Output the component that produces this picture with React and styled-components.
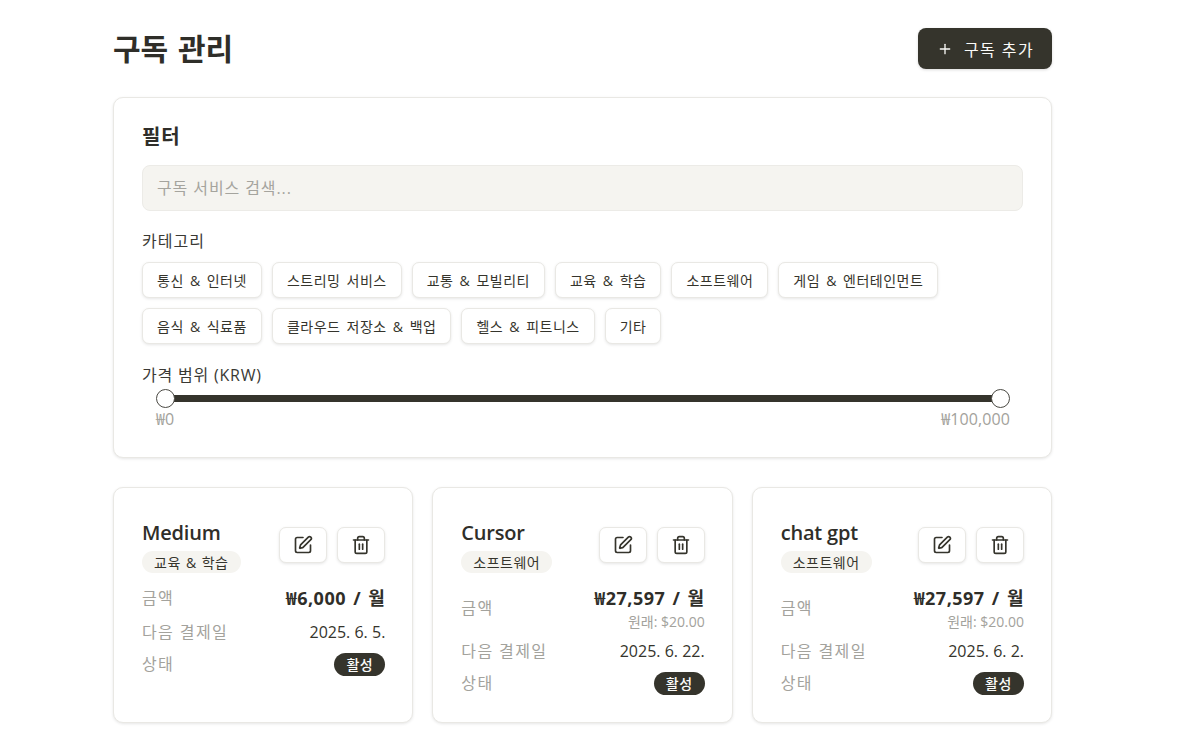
import React from "react";
import styled, { createGlobalStyle } from "styled-components";
import { Plus, SquarePen, Trash2 } from "lucide-react";

const GlobalStyle = createGlobalStyle`
  html, body {
    margin: 0;
    height: 729px;
    overflow: hidden;
    background: #ffffff;
  }
  body {
    font-family: "Open Sans", "Noto Sans CJK KR", sans-serif;
    color: #2f2e29;
  }
  * {
    box-sizing: border-box;
  }
`;

const categories = [
  "통신 & 인터넷",
  "스트리밍 서비스",
  "교통 & 모빌리티",
  "교육 & 학습",
  "소프트웨어",
  "게임 & 엔터테인먼트",
  "음식 & 식료품",
  "클라우드 저장소 & 백업",
  "헬스 & 피트니스",
  "기타",
];

const subscriptions = [
  { name: "Medium", category: "교육 & 학습", price: "₩6,000 / 월", next: "2025. 6. 5." },
  { name: "Cursor", category: "소프트웨어", price: "₩27,597 / 월", original: "원래: $20.00", next: "2025. 6. 22." },
  { name: "chat gpt", category: "소프트웨어", price: "₩27,597 / 월", original: "원래: $20.00", next: "2025. 6. 2." },
];

export default function App() {
  return (
    <Page>
      <GlobalStyle />
      <Header>
        <Title>구독 관리</Title>
        <AddButton type="button">
          <Plus size={16} strokeWidth={2} />
          구독 추가
        </AddButton>
      </Header>

      <FilterCard>
        <FilterTitle>필터</FilterTitle>
        <SearchInput placeholder="구독 서비스 검색..." />
        <Label>카테고리</Label>
        <Chips>
          {categories.map((c) => (
            <Chip key={c} type="button">{c}</Chip>
          ))}
        </Chips>
        <PriceLabel>가격 범위 (KRW)</PriceLabel>
        <Slider>
          <Track>
            <Thumb $side="left" />
            <Thumb $side="right" />
          </Track>
          <SliderValues>
            <span>₩0</span>
            <span>₩100,000</span>
          </SliderValues>
        </Slider>
      </FilterCard>

      <CardGrid>
        {subscriptions.map((s) => (
          <SubCard key={s.name}>
            <CardHead>
              <div>
                <SubName>{s.name}</SubName>
                <Tag>{s.category}</Tag>
              </div>
              <Actions>
                <IconButton type="button" aria-label="수정">
                  <SquarePen size={20} strokeWidth={2} />
                </IconButton>
                <IconButton type="button" aria-label="삭제">
                  <Trash2 size={20} strokeWidth={2} />
                </IconButton>
              </Actions>
            </CardHead>
            <Rows>
              <Row>
                <RowLabel>금액</RowLabel>
                <PriceBlock>
                  <Price>{s.price}</Price>
                  {s.original && <Original>{s.original}</Original>}
                </PriceBlock>
              </Row>
              <Row>
                <RowLabel>다음 결제일</RowLabel>
                <RowValue>{s.next}</RowValue>
              </Row>
              <Row>
                <RowLabel>상태</RowLabel>
                <Badge>활성</Badge>
              </Row>
            </Rows>
          </SubCard>
        ))}
      </CardGrid>
    </Page>
  );
}

const Page = styled.div`
  width: 939px;
  margin-left: 113px;
  padding-top: 28px;
`;

const Header = styled.header`
  display: flex;
  align-items: flex-start;
  justify-content: space-between;
  height: 42px;
  margin-bottom: 27px;
`;

const Title = styled.h1`
  margin: 0;
  font-size: 30px;
  line-height: 42px;
  font-weight: 700;
  word-spacing: 2px;
  color: #2f2e29;
`;

const AddButton = styled.button`
  display: flex;
  align-items: center;
  gap: 11px;
  width: 134px;
  height: 41px;
  padding: 0 0 0 19px;
  border: 0;
  border-radius: 8px;
  background: #35342c;
  color: #fafaf8;
  font: inherit;
  font-size: 16px;
  font-weight: 400;
  letter-spacing: 1.4px;
  box-shadow: 0 1px 3px rgba(0, 0, 0, 0.15);
`;

const FilterCard = styled.section`
  height: 361px;
  padding: 24px 28px 0 28px;
  border: 1px solid #e9e8e4;
  border-radius: 10px;
  background: #ffffff;
  box-shadow: 0 1px 3px rgba(0, 0, 0, 0.1);
`;

const FilterTitle = styled.h2`
  margin: 0 0 13px;
  font-size: 20px;
  line-height: 30px;
  font-weight: 700;
  letter-spacing: 0.8px;
`;

const SearchInput = styled.input`
  display: block;
  width: 100%;
  height: 46px;
  padding: 0 14px;
  border: 1px solid #ecebe7;
  border-radius: 8px;
  background: #f5f4f0;
  font: inherit;
  font-size: 16px;
  letter-spacing: 0.9px;
  color: #2f2e29;

  &::placeholder {
    color: #a5a49e;
    opacity: 1;
  }
`;

const Label = styled.div`
  margin-top: 18px;
  font-size: 16px;
  line-height: 24px;
  letter-spacing: 1px;
  color: #3a3934;
`;

const PriceLabel = styled(Label)`
  margin-top: 19px;
  letter-spacing: 0.8px;
`;

const Chips = styled.div`
  display: flex;
  flex-wrap: wrap;
  gap: 10px;
  margin-top: 9px;
`;

const Chip = styled.button`
  height: 36px;
  padding: 0 14px;
  border: 1px solid #e9e8e4;
  border-radius: 7px;
  background: #ffffff;
  color: #35342c;
  font: inherit;
  font-size: 14px;
  letter-spacing: 0.5px;
  word-spacing: 2px;
  box-shadow: 0 1px 3px rgba(0, 0, 0, 0.1);
`;

const Slider = styled.div`
  margin-top: 8px;
  padding: 0 13px 0 14px;
`;

const Track = styled.div`
  position: relative;
  height: 7px;
  margin: 0 10px 0 9px;
  background: #35342c;
`;

const Thumb = styled.span`
  position: absolute;
  top: -6px;
  ${(p) => (p.$side === "left" ? "left: -9px;" : "right: -10px;")}
  width: 19px;
  height: 19px;
  border: 1.5px solid #4a4943;
  border-radius: 50%;
  background: #ffffff;
`;

const SliderValues = styled.div`
  display: flex;
  justify-content: space-between;
  margin-top: 7px;
  font-size: 16px;
  line-height: 20px;
  letter-spacing: 0.1px;
  color: #a3a29c;
`;

const CardGrid = styled.div`
  display: grid;
  grid-template-columns: repeat(3, 1fr);
  gap: 19px;
  margin-top: 29px;
`;

const SubCard = styled.article`
  height: 236px;
  padding: 28px 27px 0 28px;
  border: 1px solid #e9e8e4;
  border-radius: 10px;
  background: #ffffff;
  box-shadow: 0 1px 3px rgba(0, 0, 0, 0.1);
`;

const CardHead = styled.div`
  display: flex;
  align-items: center;
  justify-content: space-between;
  margin-bottom: 11px;
`;

const SubName = styled.div`
  font-size: 20px;
  line-height: 34px;
  font-weight: 600;
  letter-spacing: -0.2px;
  margin-bottom: 1px;
`;

const Tag = styled.span`
  display: inline-flex;
  align-items: center;
  height: 22px;
  padding: 0 12px;
  border-radius: 11px;
  background: #f5f4f0;
  font-size: 14px;
  letter-spacing: 0.5px;
  word-spacing: 1px;
  color: #35342c;
`;

const Actions = styled.div`
  display: flex;
  gap: 10px;
`;

const IconButton = styled.button`
  display: flex;
  align-items: center;
  justify-content: center;
  width: 48px;
  height: 36px;
  padding: 0;
  border: 1px solid #e9e8e4;
  border-radius: 7px;
  background: #ffffff;
  color: #35342c;
  box-shadow: 0 1px 3px rgba(0, 0, 0, 0.1);
`;

const Rows = styled.div`
  display: flex;
  flex-direction: column;
  gap: 8px;
`;

const Row = styled.div`
  display: flex;
  align-items: center;
  justify-content: space-between;
`;

const RowLabel = styled.span`
  font-size: 16px;
  line-height: 24px;
  letter-spacing: 1.4px;
  color: #a3a29c;
`;

const RowValue = styled.span`
  font-size: 16px;
  line-height: 24px;
  color: #35342c;
`;

const PriceBlock = styled.div`
  text-align: right;
`;

const Price = styled.div`
  font-size: 18px;
  line-height: 28px;
  font-weight: 700;
  letter-spacing: 0.5px;
  word-spacing: 2px;
`;

const Original = styled.div`
  font-size: 14px;
  line-height: 19px;
  color: #a3a29c;
`;

const Badge = styled.span`
  display: inline-flex;
  align-items: center;
  justify-content: center;
  width: 51px;
  height: 23px;
  border-radius: 12px;
  background: #35342c;
  color: #fafaf8;
  font-size: 14px;
  font-weight: 500;
  letter-spacing: 0.5px;
`;
